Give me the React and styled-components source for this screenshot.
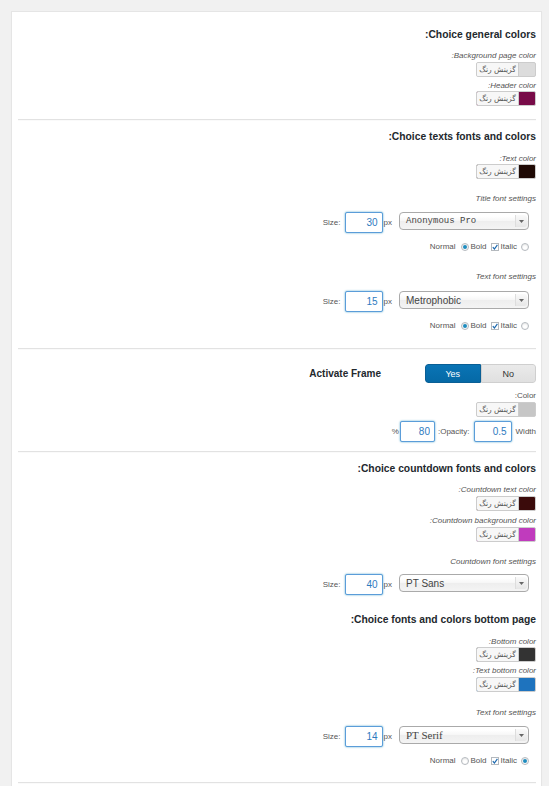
import React from "react";
import styled, { createGlobalStyle } from "styled-components";

const GlobalStyle = createGlobalStyle`
  html, body { margin: 0; padding: 0; overflow: hidden; background: #f1f1f1; }
  body { font-family: "Liberation Sans", Arial, sans-serif; }
`;

const Page = styled.div`
  padding: 11px 7px 0 11px;
  height: 786px;
  box-sizing: border-box;
  overflow: hidden;
  display: flex;
  flex-direction: column;
`;

const Panel = styled.div`
  flex: 1;
  background: #fff;
  border: 1px solid #e5e5e5;
  border-bottom: 0;
  box-shadow: 0 1px 1px rgba(0, 0, 0, 0.04);
  padding: 0 5px 0 6px;
  display: flex;
  flex-direction: column;
  align-items: flex-end;
`;

const Heading = styled.h3`
  margin: ${(p) => p.$mt}px 0 0;
  font: bold 10.3px/14px "Liberation Sans", Arial, sans-serif;
  color: #23282d;
  direction: rtl;
`;

const FieldLabel = styled.div`
  margin-top: ${(p) => p.$mt}px;
  font: ${(p) => (p.$plain ? "normal" : "italic")} 8px/10px "Liberation Sans", Arial, sans-serif;
  color: #555;
  direction: rtl;
`;

const Divider = styled.hr`
  align-self: stretch;
  margin: ${(p) => p.$mt}px 0 0;
  height: 0;
  border: 0;
  border-top: 1px solid #e2e2e2;
  border-bottom: 1px solid #fafafa;
`;

const PickerBox = styled.div`
  margin-top: ${(p) => p.$mt}px;
  display: flex;
  width: 60px;
  height: 15px;
  box-sizing: border-box;
  border: 1px solid #ccc;
  border-radius: 2px;
  overflow: hidden;
  background: ${(p) => p.$color};
`;

const PickerText = styled.span`
  width: 41px;
  background: #f7f7f7;
  border-right: 1px solid #ccc;
  font: 7.5px/13px "DejaVu Sans", sans-serif;
  color: #555;
  text-align: center;
  direction: rtl;
`;

const ColorPicker = ({ color, mt }) => (
  <PickerBox $color={color} $mt={mt}>
    <PickerText>گزینش رنگ</PickerText>
  </PickerBox>
);

const SizeRow = styled.div`
  display: flex;
  align-items: flex-start;
  margin-top: ${(p) => p.$mt}px;
  margin-right: 7px;
`;

const Unit = styled.span`
  font: 8px/${(p) => p.$lh || 21}px "Liberation Sans", Arial, sans-serif;
  color: #555;
  margin-left: ${(p) => p.$ml || 0}px;
  margin-right: ${(p) => p.$mr || 0}px;
`;

const NumberInput = styled.input`
  width: ${(p) => p.$w}px;
  height: ${(p) => p.$h || 21}px;
  box-sizing: border-box;
  border: 1px solid #5b9dd9;
  box-shadow: 0 0 2px rgba(30, 140, 190, 0.8);
  border-radius: 2px;
  padding: 0 4px;
  margin: 0;
  text-align: right;
  font: 10px "Liberation Sans", Arial, sans-serif;
  color: #2e7bbf;
  background: #fff;
  outline: none;
`;

const FontSelect = styled.div`
  width: 130px;
  height: 18px;
  box-sizing: border-box;
  border: 1px solid #aaa;
  border-radius: 4px;
  background: linear-gradient(#fff 20%, #f6f6f6 50%, #eee 52%, #f4f4f4 100%);
  display: flex;
  align-items: center;
  padding-left: 6px;
  font-family: ${(p) => p.$font};
  font-size: ${(p) => p.$size || 10}px;
  color: #444;
  overflow: hidden;
`;

const SelectValue = styled.span`
  flex: 1;
  white-space: nowrap;
`;

const SelectArrow = styled.span`
  width: 11px;
  align-self: stretch;
  margin: 2px 1px 2px 0;
  border-left: 1px solid #ddd;
  border-radius: 0 3px 3px 0;
  background: linear-gradient(#fafafa, #e6e6e6);
  display: flex;
  align-items: center;
  justify-content: center;
`;

const SizeControl = ({ value, font, fontSize, mt, face }) => (
  <SizeRow $mt={mt}>
    <Unit $mr={4}>Size:</Unit>
    <NumberInput $w={38} value={value} readOnly />
    <Unit $ml={1} $mr={7}>px</Unit>
    <FontSelect $font={face} $size={fontSize}>
      <SelectValue>{font}</SelectValue>
      <SelectArrow>
        <svg width="5" height="3" viewBox="0 0 5 3">
          <path d="M0 0h5L2.5 3z" fill="#666" />
        </svg>
      </SelectArrow>
    </FontSelect>
  </SizeRow>
);

const StyleRow = styled.div`
  display: flex;
  align-items: center;
  margin-top: ${(p) => p.$mt}px;
  margin-right: 7px;
  height: 12px;
`;

const Radio = styled.span`
  width: 8px;
  height: 8px;
  box-sizing: border-box;
  border-radius: 50%;
  border: 1px solid #b4b9be;
  background: #fff;
  box-shadow: inset 0 1px 2px rgba(0, 0, 0, 0.1);
  display: flex;
  align-items: center;
  justify-content: center;
  margin-left: ${(p) => p.$ml || 0}px;
  margin-right: ${(p) => p.$mr || 0}px;
  &::after {
    content: "";
    width: 4px;
    height: 4px;
    border-radius: 50%;
    background: ${(p) => (p.$checked ? "#1e8cbe" : "transparent")};
  }
`;

const CheckBox = styled.span`
  width: 8px;
  height: 8px;
  box-sizing: border-box;
  border: 1px solid #b4b9be;
  background: #fff;
  display: flex;
  align-items: center;
  justify-content: center;
  margin-left: ${(p) => p.$ml || 0}px;
  margin-right: ${(p) => p.$mr || 0}px;
`;

const StyleOptions = ({ mt, bold, italicRadio }) => (
  <StyleRow $mt={mt}>
    <Unit $lh={12}>Normal</Unit>
    <Radio $ml={5} $mr={2} $checked={bold} />
    <Unit $lh={12}>Bold</Unit>
    <CheckBox $ml={4} $mr={2}>
      <svg width="6" height="6" viewBox="0 0 6 6">
        <path d="M0.8 3.2 L2.4 5 L5.4 0.8" fill="none" stroke="#1e6ab0" strokeWidth="1.2" />
      </svg>
    </CheckBox>
    <Unit $lh={12}>Italic</Unit>
    <Radio $ml={4} $checked={italicRadio} />
  </StyleRow>
);

const ToggleRow = styled.div`
  display: flex;
  align-items: center;
  margin-top: ${(p) => p.$mt}px;
  gap: 44px;
`;

const RowTitle = styled.span`
  font: bold 10px/14px "Liberation Sans", Arial, sans-serif;
  color: #23282d;
`;

const ToggleGroup = styled.div`
  display: flex;
  width: 111px;
  height: 19px;
  border-radius: 3px;
  overflow: hidden;
`;

const ToggleOption = styled.span`
  flex: 1;
  display: flex;
  align-items: center;
  justify-content: center;
  box-sizing: border-box;
  font: 9px "Liberation Sans", Arial, sans-serif;
  background: ${(p) => (p.$active ? "linear-gradient(#0a74b5, #0569a6)" : "linear-gradient(#eaeaea, #e0e0e0)")};
  color: ${(p) => (p.$active ? "#fff" : "#333")};
  border: 1px solid ${(p) => (p.$active ? "#0a5f95" : "#cfcfcf")};
  border-radius: ${(p) => (p.$active ? "3px 0 0 3px" : "0 3px 3px 0")};
`;

const FrameRow = styled.div`
  display: flex;
  align-items: center;
  margin-top: ${(p) => p.$mt}px;
`;

export default function App() {
  return (
    <>
      <GlobalStyle />
      <Page>
        <Panel>
          <Heading $mt={16}>Choice general colors:</Heading>
          <FieldLabel $mt={9}>Background page color:</FieldLabel>
          <ColorPicker mt={1} color="#dcdcdc" />
          <FieldLabel $mt={4}>Header color:</FieldLabel>
          <ColorPicker mt={0} color="#780b48" />
          <Divider $mt={13} />

          <Heading $mt={9}>Choice texts fonts and colors:</Heading>
          <FieldLabel $mt={10}>Text color:</FieldLabel>
          <ColorPicker mt={0} color="#1f0a05" />
          <FieldLabel $mt={15}>Title font settings</FieldLabel>
          <SizeControl
            mt={8}
            value="30"
            font="Anonymous Pro"
            face={`"Liberation Mono", "DejaVu Sans Mono", monospace`}
            fontSize={9}
          />
          <StyleOptions mt={8} bold />
          <FieldLabel $mt={19}>Text font settings</FieldLabel>
          <SizeControl
            mt={9}
            value="15"
            font="Metrophobic"
            face={`"Liberation Sans", Arial, sans-serif`}
          />
          <StyleOptions mt={8} bold />
          <Divider $mt={16} />

          <ToggleRow $mt={14}>
            <RowTitle>Activate Frame</RowTitle>
            <ToggleGroup>
              <ToggleOption $active>Yes</ToggleOption>
              <ToggleOption>No</ToggleOption>
            </ToggleGroup>
          </ToggleRow>
          <FieldLabel $mt={8} $plain>Color:</FieldLabel>
          <ColorPicker mt={1} color="#c6c6c6" />
          <FrameRow $mt={4}>
            <Unit $mr={1}>%</Unit>
            <NumberInput $w={35} $h={21} value="80" readOnly />
            <Unit $ml={3} $mr={4}>:Opacity:</Unit>
            <NumberInput $w={38} $h={21} value="0.5" readOnly />
            <Unit $ml={4}>Width</Unit>
          </FrameRow>
          <Divider $mt={9} />

          <Heading $mt={9}>Choice countdown fonts and colors:</Heading>
          <FieldLabel $mt={9}>Countdown text color:</FieldLabel>
          <ColorPicker mt={1} color="#3b0b0b" />
          <FieldLabel $mt={5}>Countdown background color:</FieldLabel>
          <ColorPicker mt={1} color="#c03bbd" />
          <FieldLabel $mt={15}>Countdown font settings</FieldLabel>
          <SizeControl
            mt={7}
            value="40"
            font="PT Sans"
            face={`"Liberation Sans", Arial, sans-serif`}
          />

          <Heading $mt={18}>Choice fonts and colors bottom page:</Heading>
          <FieldLabel $mt={10}>Bottom color:</FieldLabel>
          <ColorPicker mt={0} color="#333333" />
          <FieldLabel $mt={4}>Text bottom color:</FieldLabel>
          <ColorPicker mt={1} color="#1e73be" />
          <FieldLabel $mt={16}>Text font settings</FieldLabel>
          <SizeControl
            mt={8}
            value="14"
            font="PT Serif"
            face={`"Liberation Serif", "Times New Roman", serif`}
            fontSize={11}
          />
          <StyleOptions mt={8} italicRadio />
          <Divider $mt={15} />
        </Panel>
      </Page>
    </>
  );
}
